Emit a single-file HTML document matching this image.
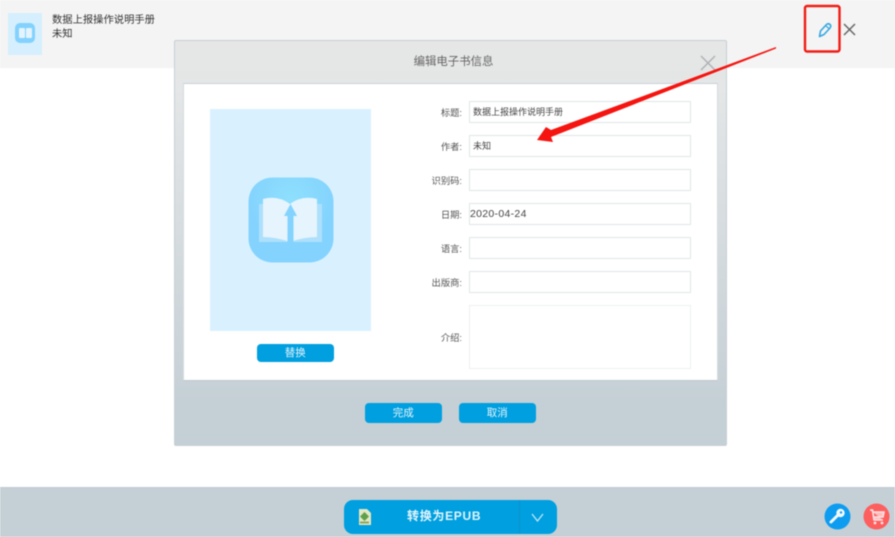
<!DOCTYPE html>
<html lang="zh">
<head>
<meta charset="utf-8">
<style>
html,body{margin:0;padding:0;background:#fff}
body{position:relative;width:895px;height:537px;overflow:hidden;font-family:"Liberation Sans","Noto Sans CJK SC",sans-serif;color:#555}
div{position:absolute;box-sizing:border-box}
#w{left:0;top:0;width:895px;height:537px;overflow:hidden;background:#fff;filter:blur(.45px)}
.top{left:0;top:0;width:895px;height:68px;background:#f4f4f4}
.thumb{left:8px;top:13px;width:34px;height:42px;background:#d6efff}
.thumb i{position:absolute;left:7px;top:10px;width:20px;height:20px;border-radius:5px;background:#82d2fd}
.thumb b{position:absolute;top:15px;width:6px;height:10px;background:#e4f4fe;border-radius:1px}
.t1{left:52px;top:14px;font-size:10.3px;line-height:14px;color:#333;white-space:nowrap}
.t2{left:52px;top:28px;font-size:10.3px;line-height:14px;color:#333}
.dlg{left:174px;top:40px;width:553px;height:406px;border:1px solid #c6d0d4;border-radius:2px;background:linear-gradient(#e6e6e6 0,#e4e6e7 12%,#c5d0d6 90%,#c5d0d6 100%)}
.title{left:174px;top:54px;width:559px;text-align:center;font-size:11.4px;line-height:16px;color:#666}
.panel{left:183px;top:83px;width:535px;height:298px;background:#fff;border:1px solid #bcc8cc;border-top-color:#c9d2d6;border-left-color:#d5dcdf;border-right-color:#d5dcdf}
.cover{left:210px;top:109px;width:161px;height:222px;background:#d9f1ff}
.btn{background:#009fdf;border-radius:4px;color:#e6f6fd;text-align:center;font-size:10.5px;height:19px;line-height:18px;width:76.5px}
.lab{width:60px;left:402px;text-align:right;font-size:9.3px;line-height:14px;color:#555;white-space:nowrap}
.inp{left:469px;width:222px;height:22px;background:#fff;border:1px solid #e1e6ea;font-size:9px;line-height:20px;padding-left:3px;color:#444;white-space:nowrap}
.bot{left:0;top:487px;width:895px;height:50px;background:#c5d0d6;border-top:1px solid #c0cbd1}
.conv{left:344px;top:500px;width:213px;height:34px;background:#009fdf;border-radius:9px}
.conv span{position:absolute;left:63px;top:8px;font-size:12px;line-height:17px;font-weight:bold;color:#e2f5fd;white-space:nowrap;letter-spacing:.7px}
.conv em{position:absolute;left:175px;top:0;width:1px;height:34px;background:#0a92cc}
svg{position:absolute}
</style>
</head>
<body>
<div id="w">
<div class="top"></div>
<div class="thumb"><i></i><b style="left:11px"></b><b style="left:18px"></b></div>
<div class="t1">数据上报操作说明手册</div>
<div class="t2">未知</div>

<div class="dlg"></div>
<div class="title">编辑电子书信息</div>
<svg style="left:699px;top:54px" width="18" height="18" viewBox="0 0 18 18"><path d="M2 2 L16 16 M16 2 L2 16" stroke="#aeb3b5" stroke-width="1.5" fill="none"/></svg>
<div class="panel"></div>
<div class="cover"></div>
<svg style="left:248px;top:177px" width="86" height="86" viewBox="0 0 86 86">
<defs><radialGradient id="g" cx="50%" cy="25%" r="50%"><stop offset="0" stop-color="#8ee0fd"/><stop offset="1" stop-color="#84d3fe"/></radialGradient></defs>
<rect x="0.5" y="0.5" width="85" height="85" rx="24" fill="url(#g)"/>
<path d="M11 27 H74 V65 H11 Z" fill="#aee0fb"/>
<path d="M15 22 Q30 18 42 27 V65 Q28 60 15 60 Z" fill="#e6f4fd"/>
<path d="M69 22 Q54 18 42 27 V65 Q56 60 69 60 Z" fill="#e6f4fd"/>
<path d="M39.5 65.5 V39 H36 L42.5 27 L49 39 H45.5 V65.5 Z" fill="#84d3fe"/>
</svg>
<div class="btn" style="left:257px;top:344px;height:18px">替换</div>

<div class="lab" style="top:106px">标题:</div>
<div class="inp" style="top:101px">数据上报操作说明手册</div>
<div class="lab" style="top:140px">作者:</div>
<div class="inp" style="top:135px">未知</div>
<div class="lab" style="top:174px">识别码:</div>
<div class="inp" style="top:169px"></div>
<div class="lab" style="top:208px">日期:</div>
<div class="inp" style="top:203px;font-size:10.5px;padding-left:0;letter-spacing:.3px">2020-04-24</div>
<div class="lab" style="top:242px">语言:</div>
<div class="inp" style="top:237px"></div>
<div class="lab" style="top:276px">出版商:</div>
<div class="inp" style="top:271px"></div>
<div class="lab" style="top:331px">介绍:</div>
<div class="inp" style="top:305px;height:64px;border-color:#eceff1"></div>

<div class="btn" style="left:365px;top:403px;height:20px;line-height:20px">完成</div>
<div class="btn" style="left:459px;top:403px;height:20px;line-height:20px">取消</div>

<div class="bot"></div>
<div class="conv">
<svg style="left:14px;top:9px" width="13" height="16" viewBox="0 0 13 16"><path d="M1 0 H9 L13 4 V16 H1 Z" fill="#e3e8c4"/><path d="M6.5 3 L11 7.5 L6.5 12 L2 7.5 Z" fill="#5fa04a"/><rect x="2" y="12.5" width="9" height="2" fill="#8fa860"/></svg>
<span>转换为EPUB</span><em></em>
<svg style="left:187px;top:13px" width="13" height="9" viewBox="0 0 13 9"><path d="M1 1 L6.5 8 L12 1" stroke="#bfe8f8" stroke-width="1.3" fill="none"/></svg>
</div>
<svg style="left:824px;top:503px" width="27" height="27" viewBox="0 0 27 27"><circle cx="13.5" cy="13.5" r="13" fill="#0d9cf0"/><circle cx="16.5" cy="10" r="4.2" fill="#f2f9fe"/><path d="M14 12 L7 19" stroke="#f2f9fe" stroke-width="3" stroke-linecap="round"/><circle cx="17" cy="9.5" r="1.2" fill="#0d9cf0"/></svg>
<svg style="left:863px;top:503px" width="27" height="27" viewBox="0 0 27 27"><circle cx="13.5" cy="13.5" r="13" fill="#fd5e5e"/><path d="M7 7 H9.5 L11 17 H20 M10 9 H21 L20 14 H10.5" stroke="#fde3e3" stroke-width="1.6" fill="#fde3e3" fill-opacity=".7"/><circle cx="12" cy="20" r="1.4" fill="#fde3e3"/><circle cx="19" cy="20" r="1.4" fill="#fde3e3"/></svg>

<svg style="left:815px;top:20px" width="20" height="20" viewBox="0 0 20 20"><path d="M4.5 16.5 L5.5 11 L11.5 4.5 Q13.5 3 15 4.5 Q16.5 6 15 8 L9 14.5 Z" stroke="#35a8e0" stroke-width="1.6" fill="none" stroke-linejoin="round"/><path d="M11 6 L14 8.5" stroke="#35a8e0" stroke-width="1.2"/></svg>
<svg style="left:842px;top:22px" width="15" height="15" viewBox="0 0 15 15"><path d="M2 2 L13 13 M13 2 L2 13" stroke="#666" stroke-width="1.5" fill="none"/></svg>

<svg style="left:0;top:0" width="895" height="537" viewBox="0 0 895 537">
<rect x="805" y="6" width="34.5" height="45.5" rx="2" fill="none" stroke="#f01c14" stroke-width="2.4"/>
<path d="M776 47 L551 130 L546 127 L537 140 L553 142 L551 137 L776 48.5 Z" fill="#f5140f"/>
</svg>
</div>
</body>
</html>
